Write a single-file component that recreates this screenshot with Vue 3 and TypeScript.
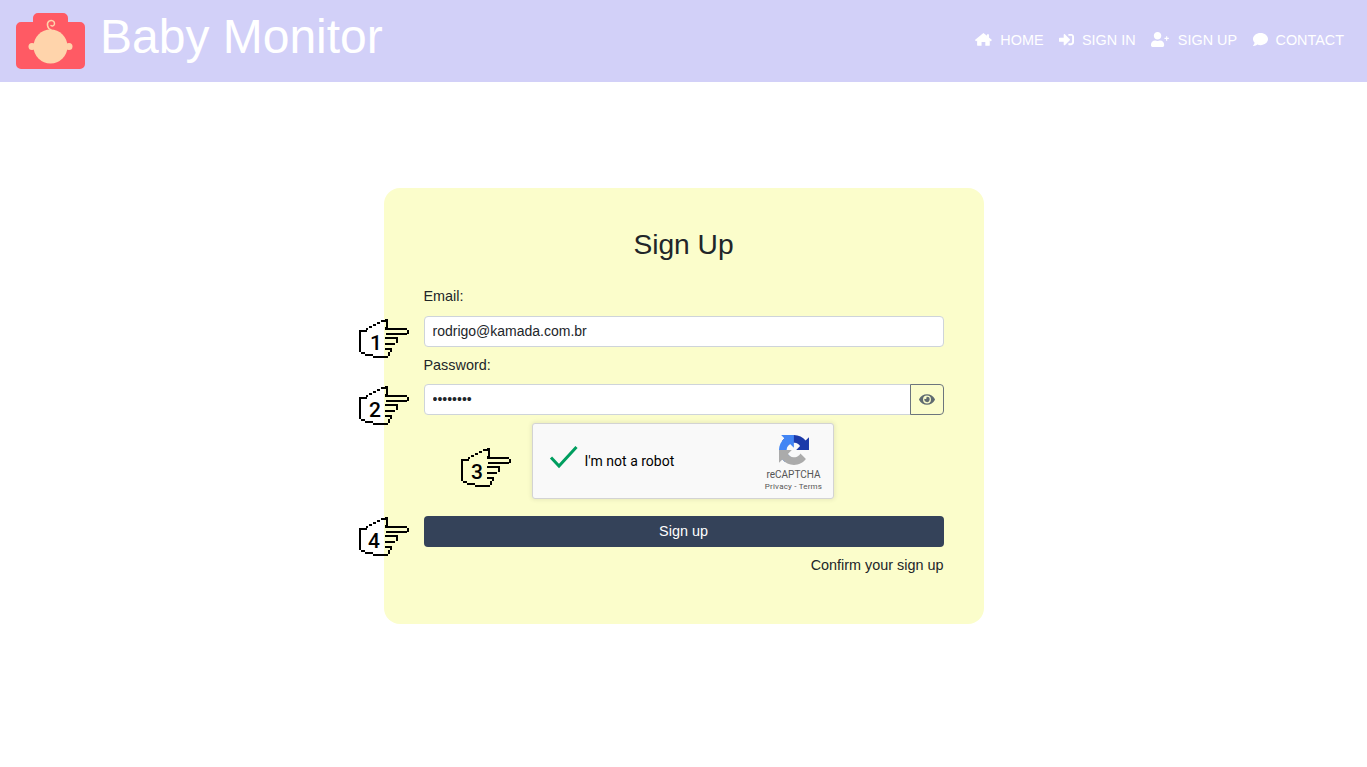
<template>
  <div class="page">
    <header class="topbar">
      <a class="brand">
        <svg class="logo" width="70" height="57" viewBox="0 0 70 57">
          <path d="M17 9V5a5 5 0 0 1 5-5h25a5 5 0 0 1 5 5v4h12a5 5 0 0 1 5 5v37a5 5 0 0 1-5 5H5a5 5 0 0 1-5-5V14a5 5 0 0 1 5-5z" fill="#ff5a64" />
          <circle cx="16" cy="33.500" r="3.500" fill="#ffd4ab" />
          <circle cx="53" cy="33.500" r="3.500" fill="#ffd4ab" />
          <circle cx="34.500" cy="33.500" r="17" fill="#ffd4ab" />
          <path d="M35 17C31 15.500 30.500 10 33 8.200 35.500 6.500 39 8 38.500 11 38.200 13 36 13.500 35 12.500" fill="none" stroke="#ffd4ab" stroke-width="1.500" stroke-linecap="round" />
        </svg>
        <span class="brand-name">Baby Monitor</span>
      </a>
      <nav class="nav">
        <a class="nav-link" v-for="item in navItems" :key="item.label">
          <svg class="nav-icon" :viewBox="item.box" fill="#fff"><path :d="item.d" /></svg>
          <span>{{ item.label }}</span>
        </a>
      </nav>
    </header>

    <main class="content">
      <form class="card" @submit.prevent>
        <h2 class="title">Sign Up</h2>

        <label class="label">Email:</label>
        <div class="field">
          <svg class="hand hand-1" width="50" height="40" viewBox="0 0 50 40">
            <path :d="handPath" shape-rendering="crispEdges" />
            <text class="hand-num" x="17" y="31">1</text>
          </svg>
          <input class="input" type="text" value="rodrigo@kamada.com.br" />
        </div>

        <label class="label label-password">Password:</label>
        <div class="field">
          <svg class="hand hand-2" width="50" height="40" viewBox="0 0 50 40">
            <path :d="handPath" shape-rendering="crispEdges" />
            <text class="hand-num" x="16" y="31">2</text>
          </svg>
          <input class="input input-group" type="password" value="12345678" />
          <button class="eye" type="button">
            <svg width="16" height="11" viewBox="0 0 576 400" fill="#5f6b70">
              <path d="M572.500 184.600C518.300 78.800 410.900 8 288 8S57.700 78.900 3.500 184.600a32.400 32.400 0 0 0 0 29.200C57.700 319.200 165.100 392 288 392s230.300-70.900 284.500-176.600a32.400 32.400 0 0 0 0-30.800zM288 344a144 144 0 1 1 144-144 143.900 143.900 0 0 1-144 144zm0-240a95.300 95.300 0 0 0-25.300 3.800 47.900 47.900 0 0 1-66.900 66.900A95.800 95.800 0 1 0 288 104z" />
            </svg>
          </button>
        </div>

        <div class="captcha-row">
          <div class="captcha">
            <svg class="hand hand-3" width="50" height="40" viewBox="0 0 50 40">
              <path :d="handPath" shape-rendering="crispEdges" />
              <text class="hand-num" x="16" y="31">3</text>
            </svg>
            <svg class="check" width="30" height="24" viewBox="0 0 30 24">
              <path d="M2 12.500 10 21 27.500 2" fill="none" stroke="#009e5f" stroke-width="3" />
            </svg>
            <span class="captcha-text">I'm not a robot</span>
            <div class="captcha-brand">
              <svg width="30" height="30" viewBox="0 0 64 64">
                <path d="M64 31.955l-.033-1.37V4.687l-7.16 7.16C50.948 4.674 42.033.093 32.050.093c-10.400 0-19.622 4.960-25.458 12.640l11.736 11.860a15.550 15.550 0 0 1 4.754-5.334c2.050-1.600 4.952-2.906 8.968-2.906.485 0 .860.057 1.135.163 4.976.393 9.288 3.140 11.828 7.124l-8.307 8.307c10.522-.040 22.400-.066 27.295.006" fill="#1c3aa9" />
                <path d="M31.862.094l-1.370.033H4.594l7.160 7.160C4.580 13.147 0 22.060 0 32.046c0 10.400 4.960 19.622 12.640 25.458l11.860-11.736a15.550 15.550 0 0 1-5.334-4.754c-1.600-2.050-2.906-4.952-2.906-8.968 0-.485.057-.860.163-1.135.393-4.976 3.140-9.288 7.124-11.828l8.307 8.307c-.040-10.522-.066-22.400.006-27.295" fill="#4285f4" />
                <path d="M.001 32.045l.033 1.370v25.898l7.160-7.160c5.860 7.173 14.774 11.754 24.760 11.754 10.400 0 19.622-4.960 25.458-12.640L45.676 39.407a15.550 15.550 0 0 1-4.754 5.334c-2.050 1.600-4.952 2.906-8.968 2.906-.485 0-.860-.057-1.135-.163-4.976-.393-9.288-3.140-11.828-7.124l8.307-8.307c-10.522.040-22.400.066-27.295-.006" fill="#ababab" />
              </svg>
              <span class="captcha-name">reCAPTCHA</span>
              <span class="captcha-links">Privacy - Terms</span>
            </div>
          </div>
        </div>

        <div class="field submit-field">
          <svg class="hand hand-4" width="50" height="40" viewBox="0 0 50 40">
            <path :d="handPath" shape-rendering="crispEdges" />
            <text class="hand-num" x="15" y="31">4</text>
          </svg>
          <button class="submit" type="submit">Sign up</button>
        </div>
        <p class="confirm">Confirm your sign up</p>
      </form>
    </main>
  </div>
</template>

<script setup lang="ts">
// pixel pointing hand, outline only so the page shows through
const handPath =
  'M26 0h3v9h19v2h2v4h-2v1H27v-2h21v-3H26V8h1V3h-5V1h4z' +
  'M18 3h3v2h-3zM14 5h3v2h-3zM10 7h3v2h-3zM7 9h2v2H7z' +
  'M0 11h8v2H2v20h4v2h8v2h15v2H14v-2H6v-2H2v-2H0z' +
  'M26 18h13v6h-2v-4H26zM26 24h10v2H26zM29 37h2v-4h-2zM31 29h2v4h-2zM26 29h7v2h-7z'

const navItems = [
  {
    label: 'HOME',
    box: '0 0 576 512',
    d: 'M288 32 406 130V90a10 10 0 0 1 10-10h50a10 10 0 0 1 10 10v98l94 77a14 14 0 0 1 2 20l-22 26a14 14 0 0 1-20 2l-26-22v165a16 16 0 0 1-16 16H352V340H224v132H88a16 16 0 0 1-16-16V291l-26 22a14 14 0 0 1-20-2L4 285a14 14 0 0 1 2-20z',
  },
  {
    label: 'SIGN IN',
    box: '0 0 512 512',
    d: 'M416 448h-84c-6.600 0-12-5.400-12-12v-40c0-6.600 5.400-12 12-12h84c17.700 0 32-14.300 32-32V160c0-17.700-14.300-32-32-32h-84c-6.600 0-12-5.400-12-12V76c0-6.600 5.400-12 12-12h84c53 0 96 43 96 96v192c0 53-43 96-96 96zm-47-201L201 79c-15-15-41-4.500-41 17v96H24c-13.300 0-24 10.700-24 24v96c0 13.300 10.700 24 24 24h136v96c0 21.500 26 32 41 17l168-168c9.300-9.400 9.300-24.600 0-34z',
  },
  {
    label: 'SIGN UP',
    box: '0 0 640 512',
    d: 'M600 200h-46v-46c0-6-4-10-10-10h-20c-6 0-10 4-10 10v46h-46c-6 0-10 4-10 10v20c0 6 4 10 10 10h46v46c0 6 4 10 10 10h20c6 0 10-4 10-10v-46h46c6 0 10-4 10-10v-20c0-6-4-10-10-10zM224 256c70.700 0 128-57.300 128-128S294.700 0 224 0 96 57.300 96 128s57.300 128 128 128zm89.600 32h-16.700c-22.200 10.200-46.900 16-72.900 16s-50.600-5.800-72.900-16h-16.700C60.200 288 0 348.200 0 422.400V464c0 26.500 21.500 48 48 48h352c26.500 0 48-21.500 48-48v-41.600c0-74.200-60.200-134.400-134.400-134.400z',
  },
  {
    label: 'CONTACT',
    box: '0 0 512 512',
    d: 'M256 32C114.600 32 0 125.100 0 240c0 49.600 21.400 95 57 130.700C44.500 421.100 2.700 466 2.200 466.500c-2.200 2.300-2.800 5.700-1.500 8.700S4.800 480 8 480c66.300 0 116-31.800 140.600-51.400 32.700 12.300 69 19.400 107.400 19.400 141.400 0 256-93.100 256-208S397.400 32 256 32z',
  },
]
</script>

<style scoped>
.page {
  font-family: "Liberation Sans", Arial, sans-serif;
  font-size: 14.4px;
  color: #212529;
  min-height: 767px;
  background: #fff;
}

.topbar {
  height: 82px;
  box-sizing: border-box;
  background: #d2d0f8;
  display: flex;
  align-items: center;
  justify-content: space-between;
  padding: 0 23px 0 16px;
}

.brand {
  display: flex;
  align-items: center;
  gap: 14px;
}

.logo {
  display: block;
  margin-top: 1px;
}

.brand-name {
  font-size: 48px;
  line-height: 72px;
  margin-bottom: 8px;
  color: #fff;
}

.nav {
  display: flex;
  gap: 15.5px;
  margin-top: -3px;
}

.nav-link {
  display: flex;
  align-items: center;
  gap: 8px;
  color: #fff;
  font-size: 14.4px;
}

.nav-icon {
  height: 15px;
  width: auto;
  display: block;
}

.content {
  display: flex;
  justify-content: center;
  padding-top: 106px;
}

.card {
  width: 600px;
  height: 436px;
  box-sizing: border-box;
  padding: 40px;
  background: #fbfdcb;
  border-radius: 16px;
}

.title {
  margin: 0 0 26px;
  font-size: 28.16px;
  font-weight: 400;
  line-height: 34px;
  text-align: center;
}

.label {
  display: block;
  line-height: 16px;
  margin-bottom: 12px;
}

.label-password {
  margin-top: 10px;
  margin-bottom: 11px;
}

.field {
  position: relative;
  display: flex;
}

.input {
  flex: 1;
  min-width: 0;
  height: 31px;
  box-sizing: border-box;
  padding: 0 8px 2px;
  border: 1px solid #ced4da;
  border-radius: 4px;
  background: #fff;
  color: #212529;
  font: 14px "Liberation Sans", Arial, sans-serif;
  outline: none;
}

.input-group {
  border-radius: 4px 0 0 4px;
}

.eye {
  width: 34px;
  height: 31px;
  margin-left: -1px;
  padding: 0;
  display: flex;
  align-items: center;
  justify-content: center;
  background: transparent;
  border: 1px solid #6c757d;
  border-radius: 0 4px 4px 0;
}

.hand {
  position: absolute;
  left: -65px;
  fill: #000;
}

.hand-1 {
  top: 3px;
}

.hand-2 {
  top: 2px;
}

.hand-3 {
  left: -72px;
  top: 24px;
}

.hand-4 {
  top: 1px;
}

.hand-num {
  font-family: Roboto, "Liberation Sans", sans-serif;
  font-size: 21px;
  font-weight: 500;
  text-anchor: middle;
}

.captcha-row {
  display: flex;
  justify-content: center;
  margin-top: 8px;
  padding-right: 2px;
}

.captcha {
  position: relative;
  width: 302px;
  height: 76px;
  box-sizing: border-box;
  display: flex;
  align-items: center;
  background: #f9f9f9;
  border: 1px solid #d3d3d3;
  border-radius: 3px;
  box-shadow: 0 0 4px 1px rgba(0, 0, 0, 0.08);
  padding-left: 16px;
}

.check {
  margin-right: 6px;
  margin-top: -8px;
}

.captcha-text {
  font: 14px Roboto, "Liberation Sans", sans-serif;
  color: #000;
}

.captcha-brand {
  position: absolute;
  right: 10px;
  top: 11px;
  width: 58px;
  display: flex;
  flex-direction: column;
  align-items: center;
}

.captcha-name {
  font: 10px/12px Roboto, "Liberation Sans", sans-serif;
  color: #555;
  margin-top: 4px;
}

.captcha-links {
  font: 8px/10px Roboto, "Liberation Sans", sans-serif;
  letter-spacing: 0.2px;
  color: #555;
  margin-top: 1px;
  white-space: nowrap;
}

.submit-field {
  margin-top: 17px;
}

.submit {
  width: 100%;
  height: 31px;
  padding: 0 0 2px;
  border: none;
  border-radius: 4px;
  background: #344259;
  color: #fff;
  font: 14.4px "Liberation Sans", Arial, sans-serif;
}

.confirm {
  margin: 10px 0 0;
  text-align: right;
  line-height: 16px;
}
</style>
